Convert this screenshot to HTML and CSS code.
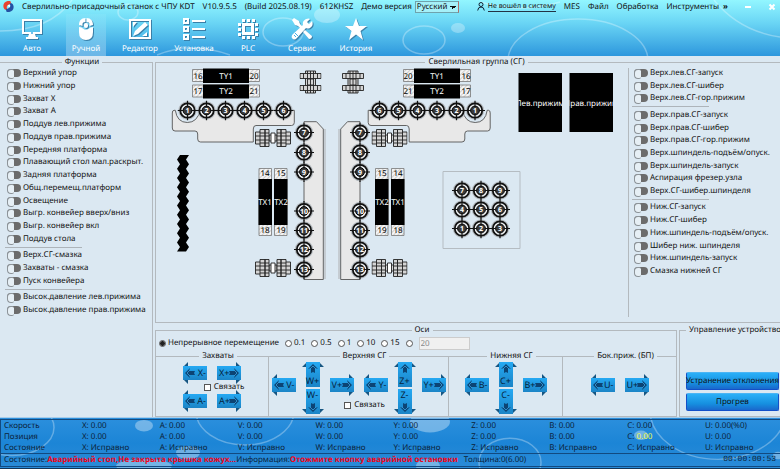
FILE: index.html
```html
<!DOCTYPE html>
<html lang="ru">
<head>
<meta charset="utf-8">
<title>Сверлильно-присадочный станок с ЧПУ KDT</title>
<link rel="stylesheet" href="styles.css">
</head>
<body>
<svg class="defs" aria-hidden="true">
  <defs>
    <linearGradient id="blue" x1="0" y1="0" x2="0" y2="1"><stop offset="0" stop-color="#25a9f3"/><stop offset="1" stop-color="#1b84c6"/></linearGradient>
    <pattern id="hatch" width="3" height="3" patternUnits="userSpaceOnUse" patternTransform="rotate(45)"><rect width="3" height="3" fill="#f4f4f4"/><rect width="1" height="3" fill="#cfcfcf"/></pattern>
    <symbol id="drill" viewBox="-10 -10 20 20">
      <circle r="9.2" fill="#b4babf"/>
      <circle r="7.2" fill="#eef1f3" stroke="#111" stroke-width="1.8"/>
      <circle r="4.4" fill="#3a3a3a" stroke="#000" stroke-width="1"/>
      <path d="M-10 0H-4M4 0H10M0-10V-4M0 4V10" stroke="#111" stroke-width="1.2"/>
    </symbol>
    <symbol id="coupling" viewBox="0 0 36 20">
      <g fill="#d4d4d4" stroke="#222" stroke-width="0.9">
        <path d="M.5 4h5v12h-5zM30.500 4h5v12h-5zM14 7h8v6h-8z"/>
        <path d="M5 1.500h5v17h-5zM10 1.500h4v17h-4zM22 1.500h4v17h-4zM26 1.500h5v17h-5z"/>
        <path d="M16 5h4v10h-4z" fill="#fff"/>
        <path d="M.5 8h13.500M.5 12h13.500M22 8h13.500M22 12h13.500M5 5h9M5 15h9M22 5h9M22 15h9"/>
      </g>
    </symbol>
    <symbol id="spindle" viewBox="0 0 22 24">
      <g fill="#d4d4d4" stroke="#222" stroke-width="0.9">
        <path d="M6 1h10v22H6zM8 9h6v6H8z"/>
        <path d="M.5 3.500h21v5H.5zM.5 15.500h21v5H.5z"/>
        <path d="M4 3.500v5M8 1v8M11 1v22M14 1v8M18 3.500v5M4 15.500v5M8 15v8M14 15v8M18 15.500v5"/>
      </g>
    </symbol>
    <symbol id="go-left" viewBox="0 0 24 22">
      <path d="M0 5 5 0v5M0 17l5 5v-5" fill="#175682"/>
      <path d="M0 4h24v14H0z" fill="url(#blue)"/>
      <path d="m2 11 5-5-1 3h6l-1 2 1 2H6l1 3z" fill="#0c4474"/><path d="m7 8-3 3 3 3" fill="none" stroke="#3a9fdd" stroke-width=".8"/>
    </symbol>
    <symbol id="go-right" viewBox="0 0 24 22">
      <path d="M24 5 19 0v5M24 17l-5 5v-5" fill="#175682"/>
      <path d="M0 4h24v14H0z" fill="url(#blue)"/>
      <path d="m22 11-5-5 1 3h-6l1 2-1 2h6l-1 3z" fill="#0c4474"/><path d="m17 8 3 3-3 3" fill="none" stroke="#3a9fdd" stroke-width=".8"/>
    </symbol>
    <symbol id="go-up" viewBox="0 0 22 25">
      <path d="M5 0 0 5h5M17 0l5 5h-5" fill="#175682"/>
      <path d="M4 0h14v25H4z" fill="url(#blue)"/>
      <path d="m11 2 5 5-3-1v5l-2-1-2 1V6L6 7z" fill="#0c4474"/><path d="m8 7 3-3 3 3" fill="none" stroke="#3a9fdd" stroke-width=".8"/>
    </symbol>
    <symbol id="go-down" viewBox="0 0 22 25">
      <path d="M5 25 0 20h5M17 25l5-5h-5" fill="#175682"/>
      <path d="M4 0h14v25H4z" fill="url(#blue)"/>
      <path d="m11 23 5-5-3 1v-5l-2 1-2-1v5l-3-1z" fill="#0c4474"/><path d="m8 18 3 3 3-3" fill="none" stroke="#3a9fdd" stroke-width=".8"/>
    </symbol>
  </defs>
</svg>

<header class="header">
  <svg class="bubbles" viewBox="0 0 780 56" preserveAspectRatio="none" aria-hidden="true">
    <g fill="none" stroke="#fff" stroke-opacity=".3" stroke-width="1.500">
      <path d="M0 31Q50 31 72 0M157 55q34-14 73 0M714 0q25 31 66 37"/>
      <ellipse cx="128" cy="12" rx="10" ry="8"/>
      <ellipse cx="283" cy="32" rx="20" ry="14"/>
      <ellipse cx="424" cy="40" rx="21" ry="14"/>
      <ellipse cx="578" cy="61" rx="70" ry="42"/>
      <path d="M480 2q40 12 80 0"/>
    </g>
    <g fill="#fff" fill-opacity=".3"><ellipse cx="327" cy="15" rx="13" ry="8"/><ellipse cx="458" cy="28" rx="7" ry="5"/></g>
  </svg>
  <div class="titlebar">
    <svg class="logo" viewBox="0 0 12 12" aria-hidden="true"><path d="M8 0C2-1-1 4 1 8c1 2 3 2 4 1C3 7 4 4 9 3z" fill="#e8432e"/><path d="M4 12c6 1 9-4 7-8-1-2-3-2-4-1 2 2 1 5-4 6z" fill="#2452a4"/><path d="M5 5c2-2 4 0 2 2z" fill="#fff"/></svg>
    <span>Сверлильно-присадочный станок с ЧПУ KDT</span>
    <span>V10.9.5.5</span>
    <span>(Build 2025.08.19)</span>
    <span>612KHSZ</span>
    <label class="lang">Демо версия <select><option>Русский</option></select></label>
    <nav class="menu">
      <a class="login" href="#"><svg viewBox="0 0 8 9" aria-hidden="true"><circle cx="4" cy="2.500" r="2" /><path d="M.7 8.500q.3-3.500 3.300-3.500t3.300 3.500"/></svg><span>Не вошёл в систему</span></a>
      <a href="#">MES</a><a href="#">Файл</a><a href="#">Обработка</a><a href="#">Инструменты</a><a class="more" href="#">»</a>
    </nav>
    <button class="win" type="button" aria-label="Свернуть"><svg viewBox="0 0 8 8"><path d="M1 4h6"/></svg></button>
    <button class="win" type="button" aria-label="Закрыть"><svg viewBox="0 0 8 8"><path d="m1.500 1.500 5 5m0-5-5 5"/></svg></button>
  </div>
  <nav class="toolbar">
    <button type="button"><svg viewBox="0 0 22 22"><path d="M1 1h20v15h-7l1 3h2v2H5v-2h2l1-3H1zM3 3v11h16V3z" fill-rule="evenodd"/><circle cx="11" cy="15" r="1" fill="#45aee6"/></svg>Авто</button>
    <button type="button" class="active"><svg viewBox="0 0 22 22"><path d="M10.500 0C6 0 4 3 4 7l3.500 1V6q0-2 3-2V0zM11.500 0C16 0 18 3 18 7l-3.500 1V6q0-2-3-2V0z"/><path d="M4 9q3 0 4 1.500 3 2.500 6 0Q15 9 18 9v5q0 8-7 8t-7-8z"/><rect x="9" y="5" width="4" height="5" rx="2"/></svg>Ручной</button>
    <button type="button"><svg viewBox="0 0 22 22"><path d="M0 1h22v20H0zM2 3v16h18V3z" fill-rule="evenodd"/><path d="m4 18 2-5L16 4l3 3-10 9zM4 4h4L4 9zM18 18h-5l5-4z"/></svg>Редактор</button>
    <button type="button"><svg viewBox="0 0 22 22"><path d="M0 0h6v6H0zm2 2v2h2V2zM0 8h6v6H0zm2 2v2h2v-2zM0 16h6v6H0zm2 2v2h2v-2zM9 2h13v2H9zM9 10h13v2H9zM9 18h13v2H9z" fill-rule="evenodd"/></svg>Установка</button>
    <button type="button"><svg viewBox="0 0 22 22"><path d="M5 5h12v12H5zM8 8v6h6V8z" fill-rule="evenodd"/><path d="M5 1h3v3H5zM10 1h3v3h-3zM15 1h3v3h-3zM5 18h3v3H5zM10 18h3v3h-3zM15 18h3v3h-3zM1 5h3v3H1zM1 10h3v3H1zM1 15h3v3H1zM18 5h3v3h-3zM18 10h3v3h-3zM18 15h3v3h-3z"/></svg>PLC</button>
    <button type="button"><svg viewBox="0 0 22 22"><path d="m1 2 2-2 5 3 1 3 4 4-2 2-4-4-3-1zM12 14l2-2 7 6q0 3-3 3z"/><path d="M15 1q3-1 4 0l-3 3 2 2 3-3q2 5-2 7-2 1-4 0L6 20q-3 3-5 0-1-2 1-4L12 7q-1-4 3-6z"/><path d="m3 17 2 2m-1-4 3 3" stroke="#49b0e6"/></svg>Сервис</button>
    <button type="button"><svg viewBox="0 0 22 22"><path d="m11 0 3 8h8l-6.500 5L18 22l-7-5.500L4 22l2.500-9L0 8h8z"/></svg>История</button>
  </nav>
</header>

<main class="main">
  <fieldset class="group functions">
    <legend>Функции</legend>
    <div class="toggles">
      <label><input type="checkbox">Верхний упор</label>
      <label><input type="checkbox">Нижний упор</label>
      <label><input type="checkbox">Захват X</label>
      <label><input type="checkbox">Захват A</label>
      <label><input type="checkbox">Поддув лев.прижима</label>
      <label><input type="checkbox">Поддув прав.прижима</label>
      <label><input type="checkbox">Передняя платформа</label>
      <label><input type="checkbox">Плавающий стол мал.раскрыт.</label>
      <label><input type="checkbox">Задняя платформа</label>
      <label><input type="checkbox">Общ.перемещ.платформ</label>
      <label><input type="checkbox">Освещение</label>
      <label><input type="checkbox">Выгр. конвейер вверх/вниз</label>
      <label><input type="checkbox">Выгр. конвейер вкл</label>
      <label><input type="checkbox">Поддув стола</label>
      <hr>
      <label><input type="checkbox">Верх.СГ-смазка</label>
      <label><input type="checkbox">Захваты - смазка</label>
      <label><input type="checkbox">Пуск конвейера</label>
      <hr>
      <label><input type="checkbox">Высок.давление лев.прижима</label>
      <label><input type="checkbox">Высок.давление прав.прижима</label>
    </div>
  </fieldset>

  <div class="work">
    <fieldset class="group drilling">
      <legend>Сверлильная группа (СГ)</legend>
      <svg class="scheme" viewBox="156 68 472 254" width="472" height="254">
        <g fill="#e8e8e8" stroke="#555" stroke-width=".9">
          <path id="plate" d="M175.300 110.300H174Q172.300 110.300 172.300 113V128Q172.300 131 175 131H195Q197.700 131 197.700 134V139Q197.700 142 200.500 142H253.300V129Q253.300 125.500 256 125.500H291.500Q294.300 125.500 294.300 122.500V110.300H200Q197.500 122.500 187.300 122.500T175.300 110.300Z"/>
          <use href="#plate" transform="matrix(-1 0 0 1 662.500 0)"/>
          <path id="column" d="M304 121.700H316.500L323.300 129V279.500H304Z"/>
          <use href="#column" transform="matrix(-1 0 0 1 664 0)"/>
          <path d="M325 129V279M339 129V279" stroke="#aaa"/>
        </g>
        <path d="M180 155h9l-3 4.600 3 4.600-3 4.600 3 4.600-3 4.600 3 4.600-3 4.600 3 4.600-3 4.600 3 4.600-3 4.600 3 4.600-3 4.600 3 4.600-3 4.600 3 4.600-3 4.600 3 4.600-3 4.600 3 4.600-3 4.600h-9l3-4.600-3-4.600 3-4.600-3-4.600 3-4.600-3-4.600 3-4.600-3-4.600 3-4.600-3-4.600 3-4.600-3-4.600 3-4.600-3-4.600 3-4.600-3-4.600 3-4.600-3-4.600 3-4.600-3-4.600z"/>
        <g fill="url(#hatch)" stroke="#777" stroke-width=".8">
          <path d="M192.500 69.500h67v12h-67zM192.500 85h67v12h-67zM403.500 69.500h67v12h-67zM403.500 85h67v12h-67z"/>
          <path d="M259 168.500h12.500v67H259zM274.500 168.500H287v67h-12.500zM375.500 168.500H388v67h-12.500zM391.500 168.500H404v67h-12.500z"/>
        </g>
        <path d="M203 68.500h46V83h-46zM203 84.500h46v14h-46zM414 68.500h46V83h-46zM414 84.500h46v14h-46zM258.500 179H272v46h-13.500zM274 179h13.500v46H274zM375 179h13.500v46H375zM391 179h13.500v46H391z"/>
        <path d="M518.500 73H562v59h-43.500zM569.500 73H613v59h-43.500z"/>
        <path d="M443 171.500h77v77h-77z" fill="none" stroke="#b5bcc2"/>
        <g class="tag">
          <text x="198" y="79">16</text><text x="254" y="79">20</text><text x="198" y="94">17</text><text x="254" y="94">21</text>
          <text x="408" y="79">20</text><text x="466" y="79">16</text><text x="408" y="94">21</text><text x="466" y="94">17</text>
          <text x="265" y="176">14</text><text x="281" y="176">15</text><text x="265" y="233">18</text><text x="281" y="233">19</text>
          <text x="382" y="176">15</text><text x="398" y="176">14</text><text x="382" y="233">19</text><text x="398" y="233">18</text>
        </g>
        <g class="tag light">
          <text x="226" y="79">TY1</text><text x="226" y="94">TY2</text><text x="437" y="79">TY1</text><text x="437" y="94">TY2</text>
          <text x="265" y="205">TX1</text><text x="281" y="205">TX2</text><text x="382" y="205">TX2</text><text x="398" y="205">TX1</text>
        </g>
        <svg class="press" x="518.500" y="73" width="43.500" height="59"><text x="50%" y="33">Лев.прижим</text></svg>
        <svg class="press" x="569.500" y="73" width="43.500" height="59"><text x="50%" y="33">Прав.прижим</text></svg>

        <use href="#spindle" x="299.500" y="70" width="22" height="24"/><use href="#spindle" x="342" y="70" width="22" height="24"/>
        <use href="#coupling" x="255" y="128" width="36" height="20"/><use href="#coupling" x="371.500" y="128" width="36" height="20"/>
        <use href="#coupling" x="255" y="258" width="36" height="20"/><use href="#coupling" x="371.500" y="258" width="36" height="20"/>

        <g id="drills">
          <use href="#drill" x="177.500" y="100.500" width="20" height="20"/><use href="#drill" x="196.500" y="100.500" width="20" height="20"/><use href="#drill" x="215.500" y="100.500" width="20" height="20"/><use href="#drill" x="234.500" y="100.500" width="20" height="20"/><use href="#drill" x="253.500" y="100.500" width="20" height="20"/><use href="#drill" x="273.500" y="100.500" width="20" height="20"/>
          <use href="#drill" x="369.500" y="100.500" width="20" height="20"/><use href="#drill" x="388.500" y="100.500" width="20" height="20"/><use href="#drill" x="407.500" y="100.500" width="20" height="20"/><use href="#drill" x="427" y="100.500" width="20" height="20"/><use href="#drill" x="446.500" y="100.500" width="20" height="20"/><use href="#drill" x="465" y="100.500" width="20" height="20"/>
          <use href="#drill" x="294" y="122.500" width="20" height="20"/><use href="#drill" x="294" y="142.500" width="20" height="20"/><use href="#drill" x="294" y="162" width="20" height="20"/><use href="#drill" x="294" y="201" width="20" height="20"/><use href="#drill" x="294" y="220.500" width="20" height="20"/><use href="#drill" x="294" y="239.500" width="20" height="20"/><use href="#drill" x="294" y="259.500" width="20" height="20"/>
          <use href="#drill" x="350" y="122.500" width="20" height="20"/><use href="#drill" x="350" y="142.500" width="20" height="20"/><use href="#drill" x="350" y="162" width="20" height="20"/><use href="#drill" x="350" y="201" width="20" height="20"/><use href="#drill" x="350" y="220.500" width="20" height="20"/><use href="#drill" x="350" y="239.500" width="20" height="20"/><use href="#drill" x="350" y="259.500" width="20" height="20"/>
          <use href="#drill" x="452" y="180.500" width="20" height="20"/><use href="#drill" x="471" y="180.500" width="20" height="20"/><use href="#drill" x="490" y="180.500" width="20" height="20"/>
          <use href="#drill" x="452" y="199.500" width="20" height="20"/><use href="#drill" x="471" y="199.500" width="20" height="20"/><use href="#drill" x="490" y="199.500" width="20" height="20"/>
          <use href="#drill" x="452" y="218.500" width="20" height="20"/><use href="#drill" x="471" y="218.500" width="20" height="20"/><use href="#drill" x="490" y="218.500" width="20" height="20"/>
        </g>
        <g class="num">
          <text x="187.500" y="113">1</text><text x="206.500" y="113">2</text><text x="225.500" y="113">3</text><text x="244.500" y="113">4</text><text x="263.500" y="113">5</text><text x="283.500" y="113">6</text>
          <text x="379.500" y="113">6</text><text x="398.500" y="113">5</text><text x="417.500" y="113">4</text><text x="437" y="113">3</text><text x="456.500" y="113">2</text><text x="475" y="113">1</text>
          <text x="304" y="135">7</text><text x="304" y="155">8</text><text x="304" y="175">9</text><text x="304" y="214">10</text><text x="304" y="233">11</text><text x="304" y="252">12</text><text x="304" y="272">13</text>
          <text x="360" y="135">7</text><text x="360" y="155">8</text><text x="360" y="175">9</text><text x="360" y="214">10</text><text x="360" y="233">11</text><text x="360" y="252">12</text><text x="360" y="272">13</text>
          <text x="462" y="193">7</text><text x="481" y="193">8</text><text x="500" y="193">9</text>
          <text x="462" y="212">4</text><text x="481" y="212">5</text><text x="500" y="212">6</text>
          <text x="462" y="231">1</text><text x="481" y="231">2</text><text x="500" y="231">3</text>
        </g>
      </svg>
      <div class="side">
        <div class="toggles">
          <label><input type="checkbox">Верх.лев.СГ-запуск</label>
          <label><input type="checkbox">Верх.лев.СГ-шибер</label>
          <label><input type="checkbox">Верх.лев.СГ-гор.прижим</label>
          <hr>
          <label><input type="checkbox">Верх.прав.СГ-запуск</label>
          <label><input type="checkbox">Верх.прав.СГ-шибер</label>
          <label><input type="checkbox">Верх.прав.СГ-гор.прижим</label>
          <label><input type="checkbox">Верх.шпиндель-подъём/опуск.</label>
          <label><input type="checkbox">Верх.шпиндель-запуск</label>
          <label><input type="checkbox">Аспирация фрезер.узла</label>
          <label><input type="checkbox">Верх.СГ-шибер.шпинделя</label>
          <hr>
          <label><input type="checkbox">Ниж.СГ-запуск</label>
          <label><input type="checkbox">Ниж.СГ-шибер</label>
          <label><input type="checkbox">Ниж.шпиндель-подъём/опуск.</label>
          <label><input type="checkbox">Шибер ниж. шпинделя</label>
          <label><input type="checkbox">Ниж.шпиндель-запуск</label>
          <label><input type="checkbox">Смазка нижней СГ</label>
        </div>
      </div>
    </fieldset>

    <div class="bottom">
      <fieldset class="group axes">
        <legend>Оси</legend>
        <div class="steps">
          <label><input type="radio" name="step" checked>Непрерывное перемещение</label>
          <label><input type="radio" name="step">0.1</label>
          <label><input type="radio" name="step">0.5</label>
          <label><input type="radio" name="step">1</label>
          <label><input type="radio" name="step">10</label>
          <label><input type="radio" name="step">15</label>
          <input type="radio" name="step" aria-label="Свой шаг">
          <input class="custom" type="text" value="20" aria-label="Шаг" disabled>
        </div>
        <div class="axis-groups">
          <fieldset class="group clamps">
            <legend>Захваты</legend>
            <div class="pair"><button class="jog" type="button"><svg><use href="#go-left"/></svg><span class="l">X-</span></button><button class="jog" type="button"><svg><use href="#go-right"/></svg><span class="r">X+</span></button></div>
            <label class="link"><input type="checkbox">Связать</label>
            <div class="pair"><button class="jog" type="button"><svg><use href="#go-left"/></svg><span class="l">A-</span></button><button class="jog" type="button"><svg><use href="#go-right"/></svg><span class="r">A+</span></button></div>
          </fieldset>
          <fieldset class="group upper">
            <legend>Верхняя СГ</legend>
            <div class="layers">
              <div class="clusters">
                <div class="cluster"><button class="jog" type="button"><svg><use href="#go-left"/></svg><span class="l">V-</span></button><div class="stack"><button class="jog tall" type="button"><svg><use href="#go-up"/></svg><span class="u">W+</span></button><button class="jog tall" type="button"><svg><use href="#go-down"/></svg><span class="d">W-</span></button></div><button class="jog" type="button"><svg><use href="#go-right"/></svg><span class="r">V+</span></button></div>
                <div class="cluster"><button class="jog" type="button"><svg><use href="#go-left"/></svg><span class="l">Y-</span></button><div class="stack"><button class="jog tall" type="button"><svg><use href="#go-up"/></svg><span class="u">Z+</span></button><button class="jog tall" type="button"><svg><use href="#go-down"/></svg><span class="d">Z-</span></button></div><button class="jog" type="button"><svg><use href="#go-right"/></svg><span class="r">Y+</span></button></div>
              </div>
              <label class="link"><input type="checkbox">Связать</label>
            </div>
          </fieldset>
          <fieldset class="group lower">
            <legend>Нижняя СГ</legend>
            <div class="cluster"><button class="jog" type="button"><svg><use href="#go-left"/></svg><span class="l">B-</span></button><div class="stack"><button class="jog tall" type="button"><svg><use href="#go-up"/></svg><span class="u">C+</span></button><button class="jog tall" type="button"><svg><use href="#go-down"/></svg><span class="d">C-</span></button></div><button class="jog" type="button"><svg><use href="#go-right"/></svg><span class="r">B+</span></button></div>
          </fieldset>
          <fieldset class="group lateral">
            <legend>Бок.приж. (БП)</legend>
            <div class="pair"><button class="jog" type="button"><svg><use href="#go-left"/></svg><span class="l">U-</span></button><button class="jog" type="button"><svg><use href="#go-right"/></svg><span class="r">U+</span></button></div>
          </fieldset>
        </div>
      </fieldset>
      <fieldset class="group device">
        <legend>Управление устройством</legend>
        <button class="cmd" type="button">Устранение отклонения</button>
        <button class="cmd" type="button">Прогрев</button>
      </fieldset>
    </div>
  </div>
</main>

<footer class="status">
  <svg class="bubbles" viewBox="0 0 780 52" preserveAspectRatio="none" aria-hidden="true">
    <g fill="none" stroke="#fff" stroke-opacity=".3" stroke-width="1.500">
      <ellipse cx="12" cy="10" rx="42" ry="29"/><ellipse cx="245" cy="-7" rx="49" ry="35"/><ellipse cx="510" cy="46" rx="31" ry="25"/><ellipse cx="718" cy="-8" rx="68" ry="51"/>
    </g>
    <g fill="#fff" fill-opacity=".35"><ellipse cx="144" cy="8" rx="9" ry="6"/><ellipse cx="188" cy="36" rx="12" ry="7"/><ellipse cx="144" cy="50" rx="28" ry="7"/><ellipse cx="430" cy="4" rx="20" ry="11"/><ellipse cx="641" cy="18" rx="7" ry="5"/><ellipse cx="428" cy="50" rx="12" ry="7"/><ellipse cx="778" cy="39" rx="5" ry="4"/></g>
  </svg>
  <table class="readout">
    <tr><th>Скорость</th><td>X: 0.00</td><td>A: 0.00</td><td>V: 0.00</td><td>W: 0.00</td><td>Y: 0.00</td><td>Z: 0.00</td><td>B: 0.00</td><td>C: 0.00</td><td>U: 0.00(%0)</td></tr>
    <tr><th>Позиция</th><td>X: 0.00</td><td>A: 0.00</td><td>V: 0.00</td><td>W: 0.00</td><td>Y: 0.00</td><td>Z: 0.00</td><td>B: 0.00</td><td>C: <span class="mark">0.00</span></td><td>U: 0.00</td></tr>
    <tr><th>Состояние</th><td>X: Исправно</td><td>A: Исправно</td><td>V: Исправно</td><td>W: Исправно</td><td>Y: Исправно</td><td>Z: Исправно</td><td>B: Исправно</td><td>C: Исправно</td><td>U: Исправно</td></tr>
  </table>
  <div class="messages">
    <span>Состояние:</span><strong>Аварийный стоп,Не закрыта крышка кожух...</strong><span>Информация:</span><strong>Отожмите кнопку аварийной остановки</strong><span class="thick">Толщина:0(6.00)</span><time>00:00:00:53</time>
  </div>
</footer>
</body>
</html>
```
FILE: styles.css
```css
* { box-sizing: border-box; }
body {
  margin: 0;
  height: 100vh;
  display: flex;
  flex-direction: column;
  overflow: hidden;
  background: #dbe8f2;
  color: #111;
  font: 8px/12px "Noto Sans", "Open Sans", sans-serif;
  text-rendering: geometricPrecision;
}
button, input, select { font: inherit; color: inherit; margin: 0; padding: 0; text-rendering: inherit; }
button { border: 0; background: none; }
a { color: inherit; text-decoration: none; }
.defs { position: absolute; width: 0; height: 0; }
.bubbles { position: absolute; inset: 0; width: 100%; height: 100%; }

/* header */
.header { position: relative; background: linear-gradient(#92f6ff, #6bd6f5 40%, #2d97dd); }
.titlebar, .toolbar { position: relative; display: flex; align-items: center; }
.titlebar { height: 13px; gap: 8px; padding: 0 4px 0 3px; white-space: nowrap; }
.logo { flex: none; width: 11px; height: 11px; }
.lang { display: flex; align-items: center; gap: 3px; }
.lang select {
  appearance: none;
  width: 44px;
  height: 12px;
  border: 1px solid #6fa3ad;
  border-right-color: #b0706a;
  border-radius: 0;
  padding: 0 0 0 1px;
  line-height: 10px;
  background:
    linear-gradient(to top right, transparent 50%, #111 50%) right 5px top 4px / 3px 3px no-repeat,
    linear-gradient(to top left, transparent 50%, #111 50%) right 2px top 4px / 3px 3px no-repeat,
    #a5f0f8;
}
.menu { flex: 1; display: flex; align-items: center; gap: 8px; padding-left: 10px; }
.login { display: flex; align-items: center; gap: 3px; font-size: 7px; line-height: 9px; }
.login span { border-bottom: 1px solid #234; }
.login svg { width: 8px; height: 9px; fill: none; stroke: #123; }
.more { margin-left: -4px; font-weight: bold; }
.win { flex: none; width: 8px; height: 8px; margin-left: 8px; }
.win svg { display: block; width: 8px; height: 8px; stroke: #fff; stroke-width: 2; }
.toolbar { gap: 14px; padding: 1px 12px 0; }
.toolbar button {
  width: 40px;
  height: 42px;
  padding-top: 4px;
  display: flex;
  flex-direction: column;
  align-items: center;
  gap: 3px;
  color: #fff;
  white-space: nowrap;
}
.toolbar svg { width: 22px; height: 22px; flex: none; fill: #fff; filter: drop-shadow(1px 1px 0 #3a7fa8); }
.toolbar .active { background: linear-gradient(rgb(255 255 255 / 5%), rgb(255 255 255 / 30%)); }

/* group boxes */
.group { margin: 0; padding: 0; min-width: 0; border: 0 solid #b3b9be; display: flex; }
.group > legend { width: 100%; padding: 0; display: flex; align-items: center; gap: 3px; white-space: nowrap; }
.group > legend::before, .group > legend::after { content: ""; height: 1px; background: #b3b9be; }
.group > legend::before { flex: 1 0 12px; }
.group > legend::after { flex: 1 0 0; }

.main { flex: 1; min-height: 0; display: flex; gap: 2px; margin-right: -5px; }
.functions { flex: 0 0 153px; border-right-width: 1px; padding-bottom: 102px; }
.toggles { flex: 1; display: flex; flex-direction: column; justify-content: space-between; padding-left: 5px; white-space: nowrap; }
.toggles label { height: 10px; line-height: 10px; display: flex; align-items: center; gap: 2px; padding-left: 2px; }
.toggles hr { width: 77px; height: 1px; margin: 0; border: 0; background: #adb4ba; }
.toggles input {
  appearance: none;
  flex: none;
  width: 14px;
  height: 8px;
  border-radius: 4px;
  background: #6c6c6c;
}
.toggles input::before {
  content: "";
  display: block;
  width: 6px;
  height: 8px;
  border: 1px solid #8d9499;
  border-right: 0;
  border-radius: 4px 2px 2px 4px;
  background: #e6eff5;
}
.work { flex: 1; min-width: 0; display: flex; flex-direction: column; gap: 1px; }
.drilling { flex: 1; border-width: 0 0 1px 1px; }
.scheme { flex: none; display: block; }
.side { flex: 1; min-width: 0; display: flex; border-left: 1px solid #b3b9be; margin-bottom: 5px; padding-bottom: 41px; }
.side .toggles { padding-left: 3px; }
.tag, .num, .press { text-anchor: middle; font-size: 8px; }
.tag.light, .press { fill: #fff; }
.press { overflow: hidden; }
.num { fill: #fff; font-size: 7px; font-weight: bold; }

/* axes */
.bottom { display: flex; gap: 2px; }
.axes { flex: 1; flex-direction: column; border-width: 0 1px 1px; }
.steps { display: flex; align-items: center; gap: 6px; height: 14px; padding-left: 3px; white-space: nowrap; }
.steps label { display: flex; align-items: center; gap: 2px; }
.steps input[type="radio"] {
  appearance: none;
  width: 7px;
  height: 7px;
  border: 1px solid #555;
  border-radius: 4px;
  background: #fff;
}
.steps input:checked { background: radial-gradient(#222 0 2px, #fff 3px); }
.steps .custom { width: 51px; height: 13px; border: 1px solid #ccc; padding: 0 1px; background: #f0f0f0; color: #888; }
.axis-groups { display: grid; grid-template-columns: 113fr 180fr 114fr 113fr; }
.axis-groups > .group { height: 66px; flex-direction: column; align-items: center; border-right-width: 1px; }
.axis-groups > .group:last-child { border-right-width: 0; }
.pair { display: flex; gap: 10px; }
.cluster { display: flex; align-items: flex-start; gap: 6px; }
.cluster > .jog { margin-top: 12px; }
.clusters { display: flex; gap: 10px; }
.stack { display: flex; flex-direction: column; gap: 2px; }
.layers { display: grid; }
.layers > * { grid-area: 1 / 1; }
.layers .link { place-self: end center; margin-bottom: 3px; padding-left: 12px; }
.jog { display: grid; width: 24px; height: 22px; color: #06253f; font-size: 9px; line-height: 12px; }
.jog.tall { width: 22px; height: 25px; }
.jog > * { grid-area: 1 / 1; }
.jog svg { width: 100%; height: 100%; }
.jog span { place-self: center; }
.jog .l { justify-self: end; padding-right: 1px; }
.jog .r { justify-self: start; padding-left: 2px; }
.jog .u { align-self: end; }
.jog .d { align-self: start; }
.link { position: relative; display: flex; align-items: center; gap: 3px; height: 12px; }
.link input { appearance: none; width: 7px; height: 7px; border: 1px solid #555; background: #fff; }
.clamps .link { margin: -3px 0; padding-left: 24px; }
.lateral .pair { padding-top: 12px; }

.device { flex: 0 0 106px; flex-direction: column; justify-content: flex-end; gap: 3px; padding-bottom: 5px; border-width: 0 0 1px 1px; }
.device > legend::before { flex: 0 0 6px; }
.cmd {
  width: 93px;
  height: 18px;
  margin-left: 6px;
  border: 1px solid #1450c8;
  border-top-color: #4bb5f5;
  border-radius: 2px;
  background: linear-gradient(#2bb0f8, #1690e0 60%, #1a68cc);
  white-space: nowrap;
  display: flex;
  align-items: center;
  justify-content: center;
}

/* status */
.status {
  position: relative;
  height: 52px;
  padding: 2px 0 4px 1px;
  border-top: 1px solid #a9cdea;
  border-bottom: 1px solid #11365a;
  background: linear-gradient(#2b8fdd, #1c85d6 50%, #2a8bd8);
  white-space: nowrap;
  overflow: hidden;
}
.readout { position: relative; width: 100%; table-layout: fixed; border-collapse: collapse; outline: 1px solid #124a80; }
.readout th, .readout td { height: 11px; padding: 0 0 0 3px; line-height: 11px; font-weight: normal; text-align: left; color: #0b2238; }
.readout .mark { color: #f4fb3c; }
.messages { position: relative; display: flex; align-items: center; height: 12px; margin-top: 1px; padding: 0 4px 0 3px; outline: 1px solid #124a80; color: #0b2238; }
.messages strong { color: #f00418; }
.messages .thick { margin-left: 6px; }
.messages time { margin-left: auto; font: 8px/12px "Liberation Mono", monospace; }
```
